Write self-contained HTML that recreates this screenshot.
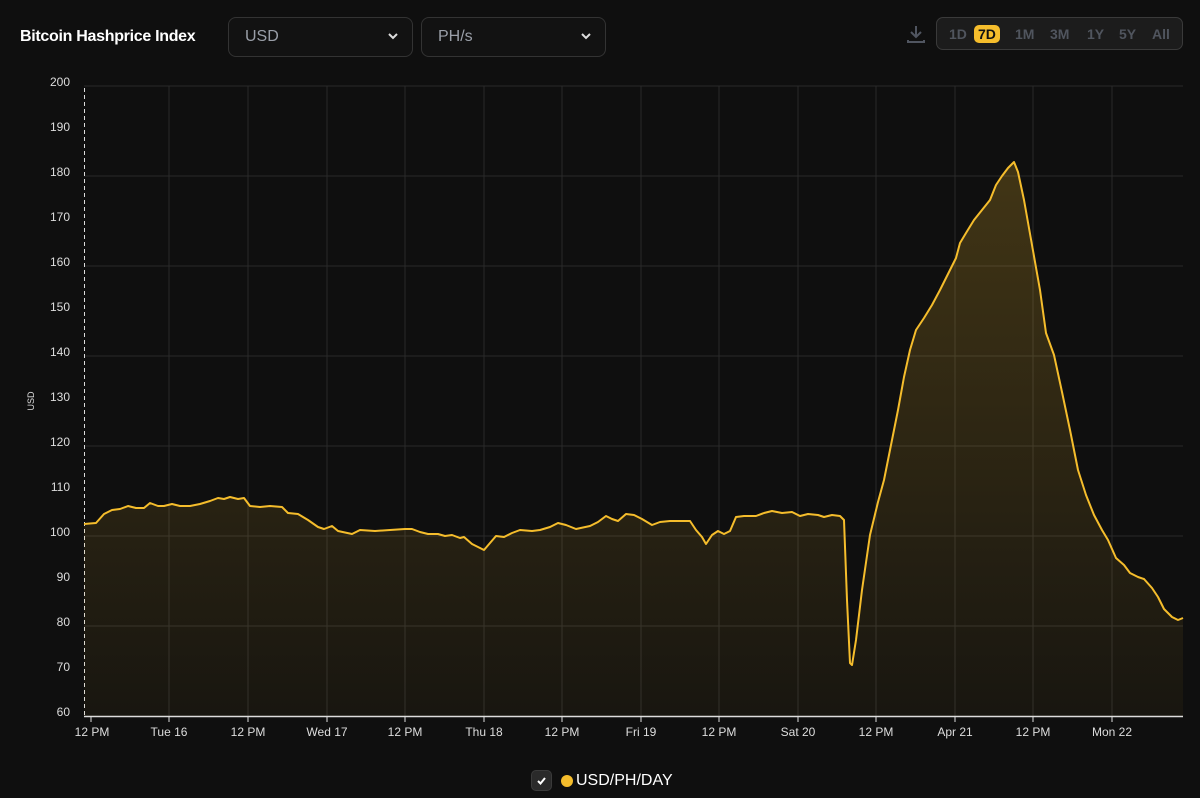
<!DOCTYPE html>
<html><head><meta charset="utf-8"><style>
body{margin:0;width:1200px;height:798px;background:#0f0f0f;font-family:"Liberation Sans",sans-serif;overflow:hidden;position:relative;color:#fff}
.t{position:absolute;left:20px;top:28px;font-weight:bold;font-size:16px;letter-spacing:-0.3px}
.sel{position:absolute;top:17px;height:40px;border:1px solid #333;border-radius:8px;background:#121212;color:#9a9fa8;font-size:16px;box-sizing:border-box;padding:10px 16px}
.sel svg{position:absolute;right:14px;top:15px}
.rng{position:absolute;left:936px;top:17px;width:247px;height:33px;border:1px solid #3a3a3a;border-radius:7px;background:#1c1c1c;box-sizing:border-box}
.rng span{position:absolute;top:8px;font-weight:bold;font-size:14px;color:#50555e}
.rng .a{background:#f5bd2c;color:#111;border-radius:5px;padding:1px 4px;top:7px}
.y{position:absolute;left:0;width:70px;text-align:right;font-size:12px;color:#ddd}
.x{position:absolute;top:725px;font-size:12px;color:#ddd;transform:translateX(-50%);white-space:nowrap}
</style></head><body>
<div class="t">Bitcoin Hashprice Index</div>
<div class="sel" style="left:228px;width:185px">USD<svg width="10" height="7"><path d="M1 1l4 4 4-4" stroke="#ddd" stroke-width="2" fill="none"/></svg></div>
<div class="sel" style="left:421px;width:185px">PH/s<svg width="10" height="7"><path d="M1 1l4 4 4-4" stroke="#ddd" stroke-width="2" fill="none"/></svg></div>
<svg style="position:absolute;left:906px;top:24px" width="20" height="20"><path d="M10 2v11M5 8l5 5 5-5M2 16v2h16v-2" stroke="#505560" stroke-width="2" fill="none"/></svg>
<div class="rng"><span style="left:12px">1D</span><span class="a" style="left:37px">7D</span><span style="left:78px">1M</span><span style="left:113px">3M</span><span style="left:150px">1Y</span><span style="left:182px">5Y</span><span style="left:215px">All</span></div>
<svg style="position:absolute;left:0;top:0" width="1200" height="798">
<defs><linearGradient id="g" x1="0" y1="0" x2="0" y2="1"><stop offset="0" stop-color="#f5bd2c" stop-opacity="0.22"/><stop offset="1" stop-color="#f5bd2c" stop-opacity="0.04"/></linearGradient></defs>
<g stroke="#2a2a2a" stroke-width="1">
<line x1="84" x2="1183" y1="86" y2="86"/><line x1="84" x2="1183" y1="176" y2="176"/><line x1="84" x2="1183" y1="266" y2="266"/><line x1="84" x2="1183" y1="356" y2="356"/><line x1="84" x2="1183" y1="446" y2="446"/><line x1="84" x2="1183" y1="536" y2="536"/><line x1="84" x2="1183" y1="626" y2="626"/>
<line x1="169" x2="169" y1="86" y2="716"/><line x1="248" x2="248" y1="86" y2="716"/><line x1="327" x2="327" y1="86" y2="716"/><line x1="405" x2="405" y1="86" y2="716"/><line x1="484" x2="484" y1="86" y2="716"/><line x1="562" x2="562" y1="86" y2="716"/><line x1="641" x2="641" y1="86" y2="716"/><line x1="719" x2="719" y1="86" y2="716"/><line x1="798" x2="798" y1="86" y2="716"/><line x1="876" x2="876" y1="86" y2="716"/><line x1="955" x2="955" y1="86" y2="716"/><line x1="1033" x2="1033" y1="86" y2="716"/><line x1="1112" x2="1112" y1="86" y2="716"/>
</g>
<line x1="84.5" x2="84.5" y1="88" y2="716" stroke="#ddd" stroke-dasharray="4 3"/>
<line x1="84" x2="1183" y1="716.5" y2="716.5" stroke="#ddd" stroke-width="1.5"/>
<g stroke="#ddd"><line x1="91" x2="91" y1="716" y2="722"/><line x1="169" x2="169" y1="716" y2="722"/><line x1="248" x2="248" y1="716" y2="722"/><line x1="327" x2="327" y1="716" y2="722"/><line x1="405" x2="405" y1="716" y2="722"/><line x1="484" x2="484" y1="716" y2="722"/><line x1="562" x2="562" y1="716" y2="722"/><line x1="641" x2="641" y1="716" y2="722"/><line x1="719" x2="719" y1="716" y2="722"/><line x1="798" x2="798" y1="716" y2="722"/><line x1="876" x2="876" y1="716" y2="722"/><line x1="955" x2="955" y1="716" y2="722"/><line x1="1033" x2="1033" y1="716" y2="722"/><line x1="1112" x2="1112" y1="716" y2="722"/></g>
<polygon fill="url(#g)" points="84,716 84,524 96,523 104,514 112,510 120,509 128,506 136,508 144,508 150,503 158,506 164,506 172,504 180,506 190,506 200,504 210,501 218,498 224,499 230,497 238,499 244,498 250,506 260,507 270,506 282,507 288,513 298,514 308,520 318,527 324,529 332,526 338,531 352,534 360,530 375,531 390,530 405,529 412,529 420,532 428,534 438,534 445,536 452,535 460,538 464,537 472,544 484,550 490,543 496,536 504,537 512,533 520,530 532,531 540,530 550,527 558,523 566,525 576,529 590,526 598,522 606,516 612,519 618,521 626,514 634,515 642,519 652,525 660,522 670,521 680,521 690,521 696,530 702,537 706,544 712,535 718,531 724,534 730,531 736,517 744,516 756,516 764,513 772,511 782,513 792,512 800,516 808,514 818,515 824,517 832,515 840,516 844,520 847,600 850,663 852,665 856,640 862,590 870,535 878,502 884,480 890,450 898,410 904,377 910,350 916,330 924,318 932,305 940,290 948,274 956,258 960,243 966,233 974,220 982,210 990,200 996,185 1002,176 1008,168 1014,162 1018,172 1024,200 1032,245 1040,290 1046,333 1054,355 1062,392 1070,430 1078,470 1086,495 1094,515 1102,530 1108,540 1116,558 1124,565 1130,573 1138,577 1144,579 1152,588 1158,597 1164,609 1172,617 1178,620 1183,618 1183,716"/>
<polyline fill="none" stroke="#f5bd2c" stroke-width="2" stroke-linejoin="round" points="84,524 96,523 104,514 112,510 120,509 128,506 136,508 144,508 150,503 158,506 164,506 172,504 180,506 190,506 200,504 210,501 218,498 224,499 230,497 238,499 244,498 250,506 260,507 270,506 282,507 288,513 298,514 308,520 318,527 324,529 332,526 338,531 352,534 360,530 375,531 390,530 405,529 412,529 420,532 428,534 438,534 445,536 452,535 460,538 464,537 472,544 484,550 490,543 496,536 504,537 512,533 520,530 532,531 540,530 550,527 558,523 566,525 576,529 590,526 598,522 606,516 612,519 618,521 626,514 634,515 642,519 652,525 660,522 670,521 680,521 690,521 696,530 702,537 706,544 712,535 718,531 724,534 730,531 736,517 744,516 756,516 764,513 772,511 782,513 792,512 800,516 808,514 818,515 824,517 832,515 840,516 844,520 847,600 850,663 852,665 856,640 862,590 870,535 878,502 884,480 890,450 898,410 904,377 910,350 916,330 924,318 932,305 940,290 948,274 956,258 960,243 966,233 974,220 982,210 990,200 996,185 1002,176 1008,168 1014,162 1018,172 1024,200 1032,245 1040,290 1046,333 1054,355 1062,392 1070,430 1078,470 1086,495 1094,515 1102,530 1108,540 1116,558 1124,565 1130,573 1138,577 1144,579 1152,588 1158,597 1164,609 1172,617 1178,620 1183,618"/>
<text x="34" y="401" fill="#ddd" font-size="9" font-family="Liberation Sans" transform="rotate(-90 34 401)" text-anchor="middle">USD</text>
</svg>
<div class="y" style="top:75px">200</div><div class="y" style="top:120px">190</div><div class="y" style="top:165px">180</div><div class="y" style="top:210px">170</div><div class="y" style="top:255px">160</div><div class="y" style="top:300px">150</div><div class="y" style="top:345px">140</div><div class="y" style="top:390px">130</div><div class="y" style="top:435px">120</div><div class="y" style="top:480px">110</div><div class="y" style="top:525px">100</div><div class="y" style="top:570px">90</div><div class="y" style="top:615px">80</div><div class="y" style="top:660px">70</div><div class="y" style="top:705px">60</div>
<div class="x" style="left:92px">12 PM</div><div class="x" style="left:169px">Tue 16</div><div class="x" style="left:248px">12 PM</div><div class="x" style="left:327px">Wed 17</div><div class="x" style="left:405px">12 PM</div><div class="x" style="left:484px">Thu 18</div><div class="x" style="left:562px">12 PM</div><div class="x" style="left:641px">Fri 19</div><div class="x" style="left:719px">12 PM</div><div class="x" style="left:798px">Sat 20</div><div class="x" style="left:876px">12 PM</div><div class="x" style="left:955px">Apr 21</div><div class="x" style="left:1033px">12 PM</div><div class="x" style="left:1112px">Mon 22</div>
<div style="position:absolute;left:531px;top:770px;width:21px;height:21px;border-radius:5px;background:#2a2a2a;border:1px solid #3a3a3a;box-sizing:border-box"><svg width="19" height="19"><path d="M6 10l2.5 2.5L13 7" stroke="#fff" stroke-width="2" fill="none"/></svg></div>
<div style="position:absolute;left:561px;top:775px;width:12px;height:12px;border-radius:50%;background:#f5bd2c"></div>
<div style="position:absolute;left:576px;top:772px;font-size:16px;color:#fff">USD/PH/DAY</div>
</body></html>
